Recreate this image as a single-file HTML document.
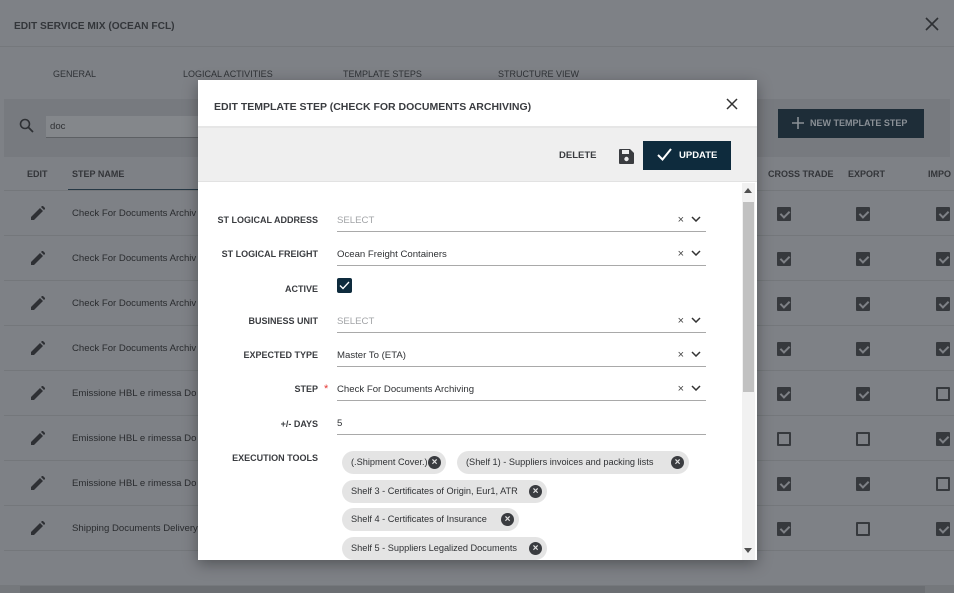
<!DOCTYPE html>
<html><head><style>
*{box-sizing:border-box;margin:0;padding:0}
body{width:954px;height:593px;overflow:hidden;background:#7e8186;font-family:"Liberation Sans",sans-serif;color:#2c2e31;position:relative}
.a{position:absolute}
.hd{font-weight:bold;font-size:9px;color:#333539}
.row{position:absolute;left:4px;right:0;height:45px;border-bottom:1px solid #74777b}
.pen{position:absolute;left:27px;top:15px}
.rt{position:absolute;left:68px;top:17px;font-size:9.6px;color:#2a2c2f;white-space:nowrap}
.cb{position:absolute;width:14px;height:14px;top:16px;border:2px solid #36393d;border-radius:1px}
.cb.on{background:#36393d}
.cb.on:after{content:"";position:absolute;left:3px;top:0px;width:4px;height:7px;border:solid #7e8186;border-width:0 2px 2px 0;transform:rotate(45deg)}
.modal{position:absolute;left:198px;top:80px;width:559px;height:480px;background:#fff;box-shadow:0 4px 14px rgba(0,0,0,.35)}
.lbl{position:absolute;right:439px;font-size:9px;font-weight:bold;color:#3a3c40;text-align:right;white-space:nowrap}
.fld{position:absolute;left:139px;width:369px;height:24px;border-bottom:1px solid #a9a9a9;font-size:9.6px;color:#2f3134}
.fld span{position:absolute;left:0;top:7px}
.fld .ph{color:#a2a4a7}
.fld .x{position:absolute;right:22px;top:6px;font-size:11px;color:#444;font-weight:normal}
.fld svg{position:absolute;right:5px;top:8px}
.chip{position:absolute;height:23px;background:#e4e4e4;border-radius:12px;font-size:9.2px;color:#2f3134;padding:6px 0 0 9px;white-space:nowrap}
.chip i{position:absolute;right:5px;top:5px;width:13px;height:13px;border-radius:50%;background:#3a3c40;color:#e4e4e4;font-style:normal;font-size:10px;font-weight:bold;line-height:13px;text-align:center}
</style></head><body>
<div class="a hd" style="left:14px;top:21px;font-size:10.2px;color:#33363a">EDIT SERVICE MIX (OCEAN FCL)</div>
<svg class="a" style="left:925px;top:17px" width="14" height="14"><path d="M1 1L13 13M13 1L1 13" stroke="#2e3034" stroke-width="1.6"/></svg>
<div class="a" style="left:0;top:46px;width:954px;height:1px;background:#75787c"></div>
<div class="a" style="left:53px;top:69px;font-size:9px;color:#2f3236">GENERAL</div>
<div class="a" style="left:183px;top:69px;font-size:9px;color:#2f3236">LOGICAL ACTIVITIES</div>
<div class="a" style="left:343px;top:69px;font-size:9px;color:#2f3236">TEMPLATE STEPS</div>
<div class="a" style="left:498px;top:69px;font-size:9px;color:#2f3236">STRUCTURE VIEW</div>
<div class="a" style="left:4px;top:99px;width:946px;height:58px;background:#777a7f"></div>
<svg class="a" style="left:19px;top:118px" width="16" height="16"><circle cx="6" cy="6" r="4.5" fill="none" stroke="#2e3034" stroke-width="1.6"/><path d="M9.5 9.5L14 14" stroke="#2e3034" stroke-width="1.8"/></svg>
<div class="a" style="left:46px;top:116px;width:160px;height:22px;background:#84878b;border-bottom:1px solid #5d6064;font-size:9.6px;padding:5px 0 0 4px;color:#2f3134">doc</div>
<div class="a" style="left:778px;top:109px;width:146px;height:29px;background:#1e2d38;color:#8a9096;font-size:9px;font-weight:bold;padding:9px 0 0 32px">NEW TEMPLATE STEP</div>
<svg class="a" style="left:792px;top:117px" width="12" height="12"><path d="M6 0V12M0 6H12" stroke="#8a9096" stroke-width="1.6"/></svg>
<div class="a hd" style="left:27px;top:169px">EDIT</div>
<div class="a hd" style="left:72px;top:169px">STEP NAME</div>
<div class="a" style="left:68px;top:189px;width:140px;height:2px;background:#263845"></div>
<div class="a hd" style="left:768px;top:169px">CROSS TRADE</div>
<div class="a hd" style="left:848px;top:169px">EXPORT</div>
<div class="a hd" style="left:928px;top:169px">IMPO</div>
<div class="a" style="left:4px;top:190px;width:950px;height:1px;background:#74777b"></div>

<div class="row" style="top:191px"><svg class="pen" width="14" height="14"><path d="M0 14V11L9 2L12 5L3 14Z M10 1L11.5 -0.5L14.5 2.5L13 4Z" fill="#2e3034"/></svg><div class="rt">Check For Documents Archiv</div><div class="cb on" style="left:773px"></div><div class="cb on" style="left:852px"></div><div class="cb on" style="left:932px"></div></div>
<div class="row" style="top:236px"><svg class="pen" width="14" height="14"><path d="M0 14V11L9 2L12 5L3 14Z M10 1L11.5 -0.5L14.5 2.5L13 4Z" fill="#2e3034"/></svg><div class="rt">Check For Documents Archiv</div><div class="cb on" style="left:773px"></div><div class="cb on" style="left:852px"></div><div class="cb on" style="left:932px"></div></div>
<div class="row" style="top:281px"><svg class="pen" width="14" height="14"><path d="M0 14V11L9 2L12 5L3 14Z M10 1L11.5 -0.5L14.5 2.5L13 4Z" fill="#2e3034"/></svg><div class="rt">Check For Documents Archiv</div><div class="cb on" style="left:773px"></div><div class="cb on" style="left:852px"></div><div class="cb on" style="left:932px"></div></div>
<div class="row" style="top:326px"><svg class="pen" width="14" height="14"><path d="M0 14V11L9 2L12 5L3 14Z M10 1L11.5 -0.5L14.5 2.5L13 4Z" fill="#2e3034"/></svg><div class="rt">Check For Documents Archiv</div><div class="cb on" style="left:773px"></div><div class="cb on" style="left:852px"></div><div class="cb on" style="left:932px"></div></div>
<div class="row" style="top:371px"><svg class="pen" width="14" height="14"><path d="M0 14V11L9 2L12 5L3 14Z M10 1L11.5 -0.5L14.5 2.5L13 4Z" fill="#2e3034"/></svg><div class="rt">Emissione HBL e rimessa Do</div><div class="cb on" style="left:773px"></div><div class="cb on" style="left:852px"></div><div class="cb" style="left:932px"></div></div>
<div class="row" style="top:416px"><svg class="pen" width="14" height="14"><path d="M0 14V11L9 2L12 5L3 14Z M10 1L11.5 -0.5L14.5 2.5L13 4Z" fill="#2e3034"/></svg><div class="rt">Emissione HBL e rimessa Do</div><div class="cb" style="left:773px"></div><div class="cb" style="left:852px"></div><div class="cb on" style="left:932px"></div></div>
<div class="row" style="top:461px"><svg class="pen" width="14" height="14"><path d="M0 14V11L9 2L12 5L3 14Z M10 1L11.5 -0.5L14.5 2.5L13 4Z" fill="#2e3034"/></svg><div class="rt">Emissione HBL e rimessa Do</div><div class="cb on" style="left:773px"></div><div class="cb on" style="left:852px"></div><div class="cb" style="left:932px"></div></div>
<div class="row" style="top:506px"><svg class="pen" width="14" height="14"><path d="M0 14V11L9 2L12 5L3 14Z M10 1L11.5 -0.5L14.5 2.5L13 4Z" fill="#2e3034"/></svg><div class="rt">Shipping Documents Delivery</div><div class="cb on" style="left:773px"></div><div class="cb" style="left:852px"></div><div class="cb on" style="left:932px"></div></div>
<div class="a" style="left:0;top:585px;width:954px;height:8px;background:#75787c"></div>
<div class="a" style="left:20px;top:586px;width:905px;height:7px;background:#6b6e72"></div>

<div class="modal">
 <div class="a hd" style="left:16px;top:21px;font-size:10.5px;color:#3a3c40">EDIT TEMPLATE STEP (CHECK FOR DOCUMENTS ARCHIVING)</div>
 <svg class="a" style="left:528px;top:18px" width="12" height="12"><path d="M1 1L11 11M11 1L1 11" stroke="#333" stroke-width="1.5"/></svg>
 <div class="a" style="left:0;top:46px;width:559px;height:56px;background:#efefef;border-top:2px solid #e6e6e6;border-bottom:1px solid #e2e2e2"></div>
 <div class="a hd" style="left:361px;top:70px;font-size:9.5px;color:#3a3c40">DELETE</div>
 <svg class="a" style="left:421px;top:69px" width="15" height="15"><path d="M0 1Q0 0 1 0H11L15 4V14Q15 15 14 15H1Q0 15 0 14Z" fill="#3a3c40"/><rect x="3" y="1" width="7" height="4" fill="#efefef"/><circle cx="7.5" cy="10" r="2.2" fill="#efefef"/></svg>
 <div class="a" style="left:445px;top:61px;width:88px;height:29px;background:#0e2b3d;color:#fff;font-size:9.5px;font-weight:bold;padding:9px 0 0 36px">UPDATE</div>
 <svg class="a" style="left:459px;top:68px" width="15" height="13"><path d="M1 7L5.5 11.5L14 1" stroke="#fff" stroke-width="2" fill="none"/></svg>
 <div class="a" style="left:544px;top:103px;width:13px;height:377px;background:#f1f1f1"></div>
 <div class="a" style="left:545px;top:122px;width:11px;height:190px;background:#c1c1c1"></div>
 <svg class="a" style="left:546px;top:108px" width="8" height="5"><path d="M0 5L4 0L8 5Z" fill="#505050"/></svg>
 <svg class="a" style="left:546px;top:468px" width="8" height="5"><path d="M0 0L4 5L8 0Z" fill="#505050"/></svg>

 <div class="lbl" style="top:135px">ST LOGICAL ADDRESS</div>
 <div class="fld" style="top:128px"><span class="ph">SELECT</span><b class="x">×</b><svg width="10" height="6"><path d="M1 1L5 5L9 1" stroke="#333" stroke-width="1.5" fill="none"/></svg></div>
 <div class="lbl" style="top:169px">ST LOGICAL FREIGHT</div>
 <div class="fld" style="top:162px"><span>Ocean Freight Containers</span><b class="x">×</b><svg width="10" height="6"><path d="M1 1L5 5L9 1" stroke="#333" stroke-width="1.5" fill="none"/></svg></div>
 <div class="lbl" style="top:204px">ACTIVE</div>
 <div class="a" style="left:139px;top:198px;width:15px;height:15px;background:#0e2b3d;border-radius:2px"></div>
 <svg class="a" style="left:141px;top:201px" width="11" height="9"><path d="M1 4.5L4 7.5L10 1" stroke="#fff" stroke-width="1.3" fill="none"/></svg>
 <div class="lbl" style="top:236px">BUSINESS UNIT</div>
 <div class="fld" style="top:229px"><span class="ph">SELECT</span><b class="x">×</b><svg width="10" height="6"><path d="M1 1L5 5L9 1" stroke="#333" stroke-width="1.5" fill="none"/></svg></div>
 <div class="lbl" style="top:270px">EXPECTED TYPE</div>
 <div class="fld" style="top:263px"><span>Master To (ETA)</span><b class="x">×</b><svg width="10" height="6"><path d="M1 1L5 5L9 1" stroke="#333" stroke-width="1.5" fill="none"/></svg></div>
 <div class="lbl" style="top:304px">STEP</div>
 <div class="a" style="left:126px;top:303px;color:#e53935;font-size:11px">*</div>
 <div class="fld" style="top:297px"><span>Check For Documents Archiving</span><b class="x">×</b><svg width="10" height="6"><path d="M1 1L5 5L9 1" stroke="#333" stroke-width="1.5" fill="none"/></svg></div>
 <div class="lbl" style="top:339px">+/- DAYS</div>
 <div class="fld" style="top:331px"><span>5</span></div>
 <div class="lbl" style="top:373px">EXECUTION TOOLS</div>
 <div class="chip" style="left:144px;top:371px;width:104px">(.Shipment Cover.)<i>×</i></div>
 <div class="chip" style="left:259px;top:371px;width:232px">(Shelf 1) - Suppliers invoices and packing lists<i>×</i></div>
 <div class="chip" style="left:144px;top:400px;width:205px">Shelf 3 - Certificates of Origin, Eur1, ATR<i>×</i></div>
 <div class="chip" style="left:144px;top:428px;width:177px">Shelf 4 - Certificates of Insurance<i>×</i></div>
 <div class="chip" style="left:144px;top:457px;width:205px;height:23px">Shelf 5 - Suppliers Legalized Documents<i>×</i></div>
</div>
</body></html>
